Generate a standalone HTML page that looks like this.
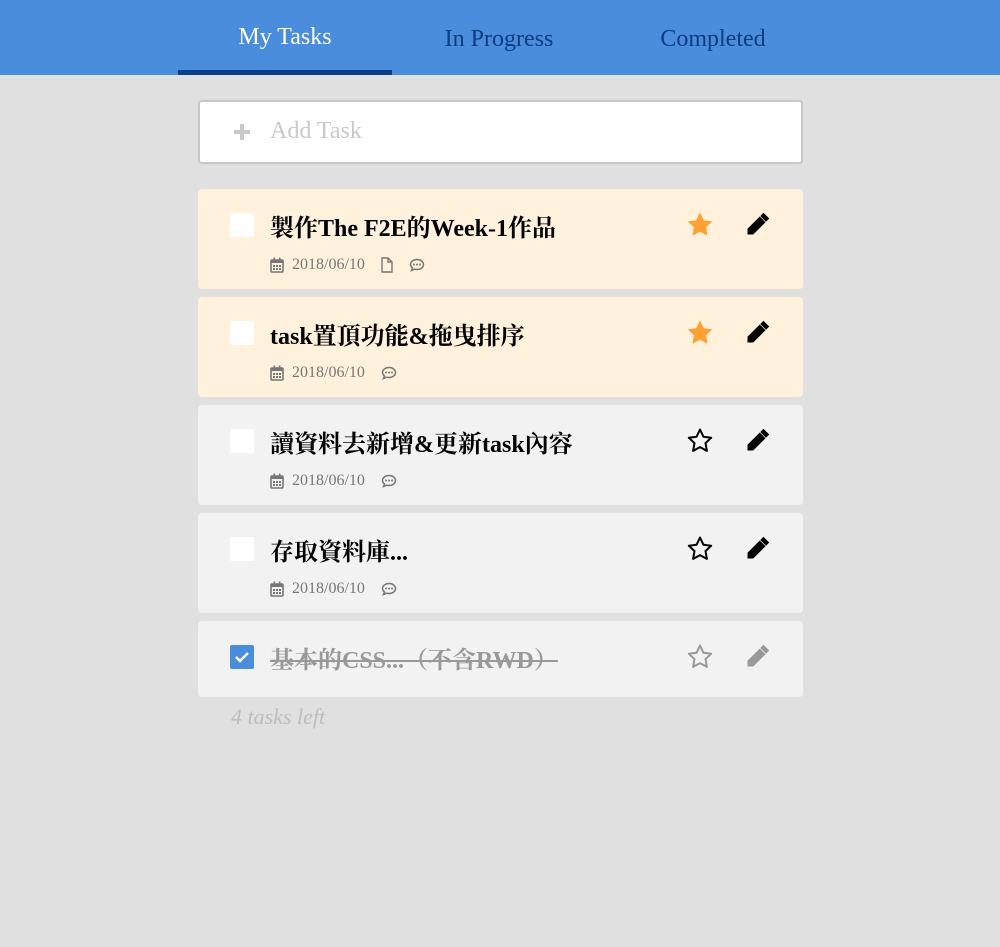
<!DOCTYPE html>
<html><head><meta charset="utf-8"><style>
*{box-sizing:border-box;margin:0;padding:0}
body{width:1000px;height:947px;background:#e0e0e0;font-family:"Liberation Serif","Noto Serif CJK SC",serif;position:relative;overflow:hidden}
.hdr{position:absolute;left:0;top:0;width:1000px;height:75px;background:#4a8ddc}
.tab{position:absolute;top:0;width:214px;height:75px;text-align:center;font-size:24px;line-height:78px;color:#0d3c80}
.tab.on{color:#fff;line-height:74px}
.tab.on:after{content:"";position:absolute;left:0;bottom:0;width:214px;height:5px;background:#0a3f8a}
.add{position:absolute;left:198px;top:100px;width:605px;height:64px;background:#fff;border:2px solid #c8c8c8;border-radius:4px}
.add .p{position:absolute;left:33px;top:21px}
.add .t{position:absolute;left:70px;top:16px;font-size:24px;color:#c9c9c9}
.card{position:absolute;left:198px;width:605px;border-radius:4px;background:#f2f2f2}
.card.y{background:#fff1db}
.cb{position:absolute;left:32px;top:24px;width:24px;height:24px;background:#fff;border-radius:2px}
.ti{position:absolute;left:72px;top:19px;font-size:24px;font-weight:bold;color:#000;white-space:nowrap}
.meta{position:absolute;left:72px;top:67px;font-size:16px;color:#777;display:flex;align-items:center}
.star{position:absolute;left:489px;top:23px}
.pen{position:absolute;left:547px;top:22px}
.left{position:absolute;left:231px;top:704px;font-size:22px;font-style:italic;color:#bdbdbd}
</style></head><body>
<div class="hdr">
<div class="tab on" style="left:178px">My Tasks</div>
<div class="tab" style="left:392px">In Progress</div>
<div class="tab" style="left:606px">Completed</div>
</div>
<div class="add"><svg class="p" width="18" height="18"><path d="M9 1v16M1 9h16" stroke="#c9c9c9" stroke-width="4"/></svg><span class="t">Add Task</span></div>

<svg width="0" height="0" style="position:absolute">
<defs>
<symbol id="cal" viewBox="0 0 14 16"><rect x="1" y="3" width="12" height="12" rx="1" fill="none" stroke="#777" stroke-width="1.6"/><rect x="1" y="3" width="12" height="3" fill="#777"/><rect x="3.5" y="0.5" width="1.6" height="3" fill="#777"/><rect x="8.9" y="0.5" width="1.6" height="3" fill="#777"/><g fill="#777"><rect x="3" y="8" width="2" height="2"/><rect x="6" y="8" width="2" height="2"/><rect x="9" y="8" width="2" height="2"/><rect x="3" y="11" width="2" height="2"/><rect x="6" y="11" width="2" height="2"/><rect x="9" y="11" width="2" height="2"/></g></symbol>
<symbol id="file" viewBox="0 0 12 16"><path d="M1 1h6l4 4v10H1z M7 1v4h4" fill="none" stroke="#777" stroke-width="1.4"/></symbol>
<symbol id="cmt" viewBox="0 0 16 14"><path d="M8 1.5c3.6 0 6.5 2.2 6.5 5s-2.9 5-6.5 5c-.8 0-1.6-.1-2.3-.3L2.5 12.5l1-2.4C2.3 9.1 1.5 7.9 1.5 6.5c0-2.8 2.9-5 6.5-5z" fill="none" stroke="#777" stroke-width="1.5"/><g fill="#777"><circle cx="5" cy="6.5" r="1"/><circle cx="8" cy="6.5" r="1"/><circle cx="11" cy="6.5" r="1"/></g></symbol>
<symbol id="st" viewBox="0 0 26 26"><path d="M13 1.5l3.4 7.2 7.8 1-5.7 5.4 1.4 7.8L13 19.1l-6.9 3.8 1.4-7.8L1.8 9.7l7.8-1z" stroke-linejoin="round"/></symbol>
<symbol id="pn" viewBox="0 0 26 26"><path d="M18.5 2.5l5 5-2.5 2.5-5-5z M14.8 6.2l5 5L8 23H3v-5z" /><path d="M5 18.5l2.5 2.5" stroke-width="1.5"/></symbol>
</defs></svg>

<div class="card y" style="top:189px;height:100px">
<div class="cb"></div><div class="ti">製作The F2E的Week-1作品</div>
<div class="meta"><svg width="14" height="16"><use href="#cal"/></svg><span style="margin:0 16px 0 8px">2018/06/10</span><svg width="12" height="16"><use href="#file"/></svg><svg width="16" height="14" style="margin-left:16px"><use href="#cmt"/></svg></div>
<svg class="star" width="26" height="26"><use href="#st" fill="#ffa033" stroke="#ffa033"/></svg>
<svg class="pen" width="26" height="26"><use href="#pn" fill="#000" stroke="#000"/></svg>
</div>
<div class="card y" style="top:297px;height:100px">
<div class="cb"></div><div class="ti">task置頂功能&amp;拖曳排序</div>
<div class="meta"><svg width="14" height="16"><use href="#cal"/></svg><span style="margin:0 16px 0 8px">2018/06/10</span><svg width="16" height="14"><use href="#cmt"/></svg></div>
<svg class="star" width="26" height="26"><use href="#st" fill="#ffa033" stroke="#ffa033"/></svg>
<svg class="pen" width="26" height="26"><use href="#pn" fill="#000" stroke="#000"/></svg>
</div>
<div class="card" style="top:405px;height:100px">
<div class="cb"></div><div class="ti">讀資料去新增&amp;更新task內容</div>
<div class="meta"><svg width="14" height="16"><use href="#cal"/></svg><span style="margin:0 16px 0 8px">2018/06/10</span><svg width="16" height="14"><use href="#cmt"/></svg></div>
<svg class="star" width="26" height="26"><use href="#st" fill="none" stroke="#000" stroke-width="2"/></svg>
<svg class="pen" width="26" height="26"><use href="#pn" fill="#000" stroke="#000"/></svg>
</div>
<div class="card" style="top:513px;height:100px">
<div class="cb"></div><div class="ti">存取資料庫...</div>
<div class="meta"><svg width="14" height="16"><use href="#cal"/></svg><span style="margin:0 16px 0 8px">2018/06/10</span><svg width="16" height="14"><use href="#cmt"/></svg></div>
<svg class="star" width="26" height="26"><use href="#st" fill="none" stroke="#000" stroke-width="2"/></svg>
<svg class="pen" width="26" height="26"><use href="#pn" fill="#000" stroke="#000"/></svg>
</div>
<div class="card" style="top:621px;height:76px">
<div class="cb" style="background:#4a8ddc"><svg width="24" height="24"><path d="M6 12l4 4 8-8" fill="none" stroke="#fff" stroke-width="2.4"/></svg></div>
<div class="ti" style="color:#999;text-decoration:line-through;text-decoration-thickness:2px">基本的CSS...（不含RWD）</div>
<svg class="star" width="26" height="26"><use href="#st" fill="none" stroke="#999" stroke-width="2"/></svg>
<svg class="pen" width="26" height="26"><use href="#pn" fill="#999" stroke="#999"/></svg>
</div>
<div class="left">4 tasks left</div>
</body></html>
